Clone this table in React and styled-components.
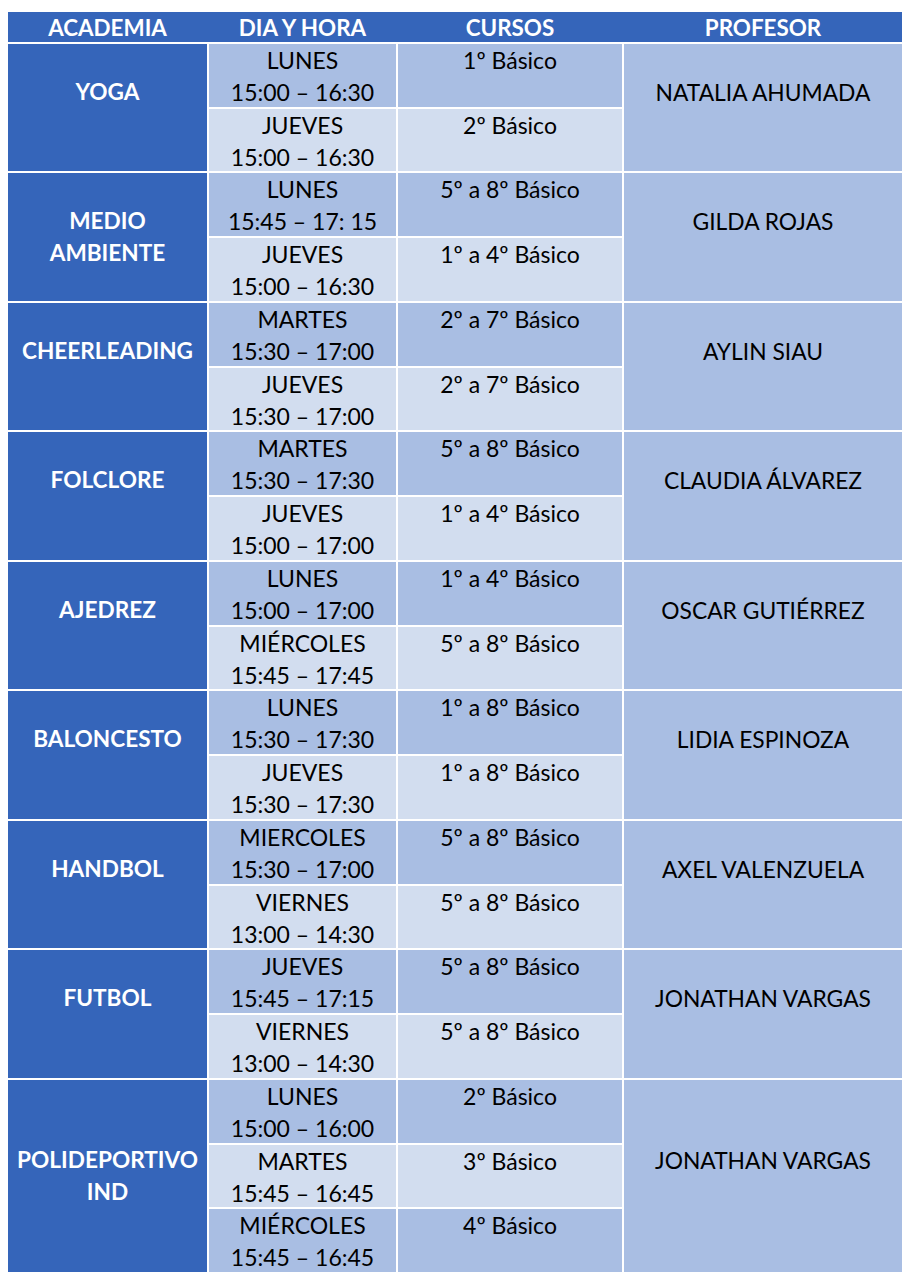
import React from "react";
import styled, { createGlobalStyle } from "styled-components";

const Global = createGlobalStyle`
  html, body { margin: 0; padding: 0; background: #ffffff; }
  body { font-family: Lato, "Open Sans", sans-serif; }
`;

const Page = styled.div`
  padding: 12px 6px 8px 8px;
`;

const Grid = styled.div`
  display: grid;
  width: 894px;
  height: 1260px;
  grid-template-columns: 199px 187px 224px 278px;
  grid-template-rows: 30px repeat(19, minmax(0, 1fr));
  gap: 2px;
  background: #ffffff;
`;

const Head = styled.div`
  grid-column: 1 / -1;
  display: grid;
  grid-template-columns: 201px 189px 226px 278px;
  background: #3565ba;
`;

const HeadCell = styled.div`
  color: #ffffff;
  font-weight: 700;
  font-size: 22.4px;
  display: flex;
  align-items: center;
  justify-content: center;
  padding-right: ${(p) => (p.$trim ? "2px" : "0")};
`;

const Academy = styled.div`
  grid-row: span ${(p) => p.$span};
  background: #3565ba;
  color: #ffffff;
  font-weight: 700;
  font-size: 22.6px;
  line-height: 32px;
  display: flex;
  flex-direction: column;
  align-items: center;
  justify-content: center;
  text-align: center;
`;

const Slot = styled.div`
  background: ${(p) => (p.$light ? "#d2ddef" : "#a9bee3")};
  color: #000000;
  font-size: 23px;
  line-height: 32px;
  text-align: center;
  display: flex;
  flex-direction: column;
  align-items: center;
  min-height: 0;
`;

const Teacher = styled.div`
  grid-row: span ${(p) => p.$span};
  background: #a9bee3;
  color: #000000;
  font-size: 22.8px;
  line-height: 32px;
  display: flex;
  flex-direction: column;
  align-items: center;
  justify-content: center;
  text-align: center;
`;

const Line = styled.span`
  display: block;
  white-space: nowrap;
  min-height: 32px;
`;

const data = [
  { name: ["YOGA"], prof: "NATALIA AHUMADA", slots: [["LUNES", "15:00 – 16:30", "1º Básico"], ["JUEVES", "15:00 – 16:30", "2º Básico"]] },
  { name: ["MEDIO", "AMBIENTE"], prof: "GILDA ROJAS", slots: [["LUNES", "15:45 – 17: 15", "5º a 8º Básico"], ["JUEVES", "15:00 – 16:30", "1º a 4º Básico"]] },
  { name: ["CHEERLEADING"], prof: "AYLIN SIAU", slots: [["MARTES", "15:30 – 17:00", "2º a 7º Básico"], ["JUEVES", "15:30 – 17:00", "2º a 7º Básico"]] },
  { name: ["FOLCLORE"], prof: "CLAUDIA ÁLVAREZ", slots: [["MARTES", "15:30 – 17:30", "5º a 8º Básico"], ["JUEVES", "15:00 – 17:00", "1º a 4º Básico"]] },
  { name: ["AJEDREZ"], prof: "OSCAR GUTIÉRREZ", slots: [["LUNES", "15:00 – 17:00", "1º a 4º Básico"], ["MIÉRCOLES", "15:45 – 17:45", "5º a 8º Básico"]] },
  { name: ["BALONCESTO"], prof: "LIDIA ESPINOZA", slots: [["LUNES", "15:30 – 17:30", "1º a 8º Básico"], ["JUEVES", "15:30 – 17:30", "1º a 8º Básico"]] },
  { name: ["HANDBOL"], prof: "AXEL VALENZUELA", slots: [["MIERCOLES", "15:30 – 17:00", "5º a 8º Básico"], ["VIERNES", "13:00 – 14:30", "5º a 8º Básico"]] },
  { name: ["FUTBOL"], prof: "JONATHAN VARGAS", slots: [["JUEVES", "15:45 – 17:15", "5º a 8º Básico"], ["VIERNES", "13:00 – 14:30", "5º a 8º Básico"]] },
  { name: ["POLIDEPORTIVO", "IND"], prof: "JONATHAN VARGAS", slots: [["LUNES", "15:00 – 16:00", "2º Básico"], ["MARTES", "15:45 – 16:45", "3º Básico"], ["MIÉRCOLES", "15:45 – 16:45", "4º Básico"]] },
];

function Lines({ items }) {
  const padded = items.length === 1 ? [...items, "\u00a0"] : items;
  return padded.map((t, i) => <Line key={i}>{t}</Line>);
}

export default function App() {
  return (
    <Page>
      <Global />
      <Grid>
        <Head>
          <HeadCell $trim>ACADEMIA</HeadCell>
          <HeadCell $trim>DIA Y HORA</HeadCell>
          <HeadCell $trim>CURSOS</HeadCell>
          <HeadCell>PROFESOR</HeadCell>
        </Head>
        {data.map((g, gi) => {
          const span = g.slots.length;
          const cells = [];
          g.slots.forEach((s, si) => {
            const light = si % 2 === 1;
            if (si === 0) {
              cells.push(
                <Academy key={`a${gi}`} $span={span}>
                  <Lines items={g.name} />
                </Academy>
              );
            }
            cells.push(
              <Slot key={`d${gi}-${si}`} $light={light}>
                <Line>{s[0]}</Line>
                <Line>{s[1]}</Line>
              </Slot>
            );
            cells.push(
              <Slot key={`c${gi}-${si}`} $light={light}>
                <Line>{s[2]}</Line>
              </Slot>
            );
            if (si === 0) {
              cells.push(
                <Teacher key={`p${gi}`} $span={span}>
                  <Lines items={[g.prof]} />
                </Teacher>
              );
            }
          });
          return cells;
        })}
      </Grid>
    </Page>
  );
}
